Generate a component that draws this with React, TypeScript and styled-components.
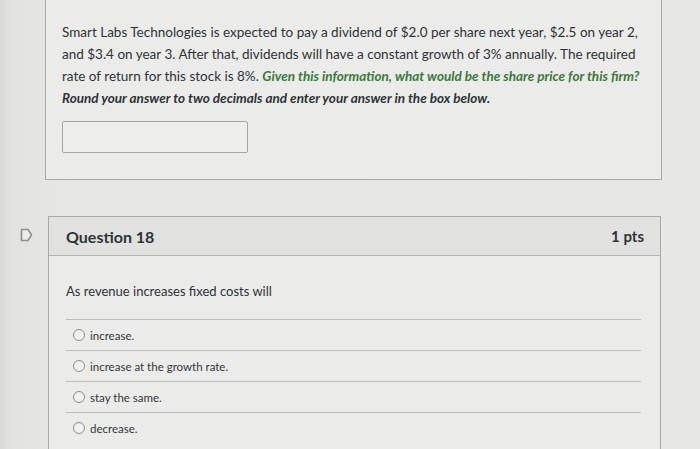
import React from "react";
import styled, { createGlobalStyle } from "styled-components";

const Global = createGlobalStyle`
  html, body { margin: 0; padding: 0; }
  body {
    width: 700px; height: 449px; overflow: hidden;
    background: linear-gradient(90deg, #d9d9d7 0px, #e2e2e0 12px, #e6e6e4 60px, #e7e7e5 100%);
    font-family: Lato, "Open Sans", sans-serif;
    color: #2d3b45;
  }
`;

const Page = styled.div`
  display: flex;
  flex-direction: column;
  gap: 36px;
  width: 700px;
`;

const Row = styled.div`
  display: flex;
  align-items: flex-start;
`;

const Gutter = styled.div<{ $w: number }>`
  width: ${(p) => p.$w}px;
  flex: none;
  display: flex;
  justify-content: flex-end;
  padding-right: 15px;
  box-sizing: border-box;
  padding-top: 12px;
`;

const Card = styled.div<{ $w: number }>`
  width: ${(p) => p.$w}px;
  box-sizing: border-box;
  border: 1px solid #a9a9a7;
  background: #ebebe9;
`;

const TopCard = styled(Card)`
  border-top: none;
  padding: 21px 16px 26px 16px;
`;

const Prompt = styled.p`
  margin: 0;
  font-size: 13.5px;
  line-height: 22px;
  color: #2f3337;
  white-space: nowrap;
`;

const Green = styled.em`
  color: #3a7a3a;
  font-weight: 700;
`;

const BoldItalic = styled.em`
  font-weight: 700;
  color: #2f3337;
`;

const Answer = styled.div`
  margin-top: 12px;
  width: 186px;
  height: 32px;
  box-sizing: border-box;
  border: 1px solid #a5a5a3;
  border-radius: 2px;
  background: #eeeeec;
`;

const QCard = styled(Card)`
  border-bottom: none;
  height: 240px;
`;

const Header = styled.div`
  height: 38px;
  display: flex;
  align-items: center;
  justify-content: space-between;
  padding: 0 16px 0 17px;
  background: #e1e1df;
  border-bottom: 1px solid #b2b2b0;
`;

const Title = styled.span`
  font-size: 16px;
  font-weight: 700;
  color: #2f3337;
`;

const Pts = styled.span`
  font-size: 15px;
  font-weight: 700;
  color: #2f3337;
`;

const Body = styled.div`
  padding: 25px 19px 0 17px;
`;

const Question = styled.div`
  font-size: 13px;
  color: #2f3337;
  height: 20px;
  line-height: 20px;
  margin-bottom: 18px;
`;

const Option = styled.div`
  display: flex;
  align-items: center;
  gap: 5px;
  height: 30px;
  border-top: 1px solid #bdbdbb;
  padding-left: 7px;
  font-size: 11.5px;
  color: #33383c;
`;

const Radio = styled.span`
  width: 10px;
  height: 10px;
  border-radius: 50%;
  border: 1px solid #8c8c8a;
  background: #f1f1ef;
  flex: none;
`;

const Flag = () => (
  <svg width="13" height="14" viewBox="0 0 13 14">
    <path d="M1.5 1.5 H8 L11.5 7 L8 12.5 H1.5 Z" fill="#ececea" stroke="#8e8e8c" strokeWidth="1.6" strokeLinejoin="round" />
  </svg>
);

const options = ["increase.", "increase at the growth rate.", "stay the same.", "decrease."];

export default function App() {
  return (
    <>
      <Global />
      <Page>
        <Row>
          <Gutter $w={45} />
          <TopCard $w={617}>
            <Prompt>
              Smart Labs Technologies is expected to pay a dividend of $2.0 per share next year, $2.5 on year 2,
              <br />
              and $3.4 on year 3. After that, dividends will have a constant growth of 3% annually. The required
              <br />
              rate of return for this stock is 8%.{" "}
              <Green>Given this information, what would be the share price for this firm?</Green>
              <br />
              <BoldItalic>Round your answer to two decimals and enter your answer in the box below.</BoldItalic>
            </Prompt>
            <Answer />
          </TopCard>
        </Row>
        <Row>
          <Gutter $w={48}>
            <Flag />
          </Gutter>
          <QCard $w={613}>
            <Header>
              <Title>Question 18</Title>
              <Pts>1 pts</Pts>
            </Header>
            <Body>
              <Question>As revenue increases fixed costs will</Question>
              {options.map((o) => (
                <Option key={o}>
                  <Radio />
                  {o}
                </Option>
              ))}
            </Body>
          </QCard>
        </Row>
      </Page>
    </>
  );
}
